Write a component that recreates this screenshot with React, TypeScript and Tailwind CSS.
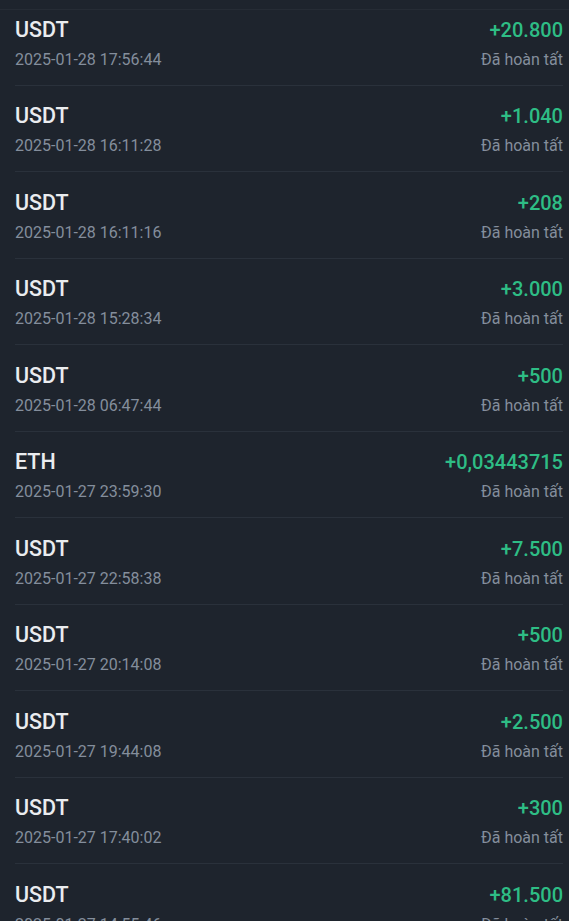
import React from "react";

const rows = [
  { coin: "USDT", date: "2025-01-28 17:56:44", amount: "+20.800" },
  { coin: "USDT", date: "2025-01-28 16:11:28", amount: "+1.040" },
  { coin: "USDT", date: "2025-01-28 16:11:16", amount: "+208" },
  { coin: "USDT", date: "2025-01-28 15:28:34", amount: "+3.000" },
  { coin: "USDT", date: "2025-01-28 06:47:44", amount: "+500" },
  { coin: "ETH", date: "2025-01-27 23:59:30", amount: "+0,03443715" },
  { coin: "USDT", date: "2025-01-27 22:58:38", amount: "+7.500" },
  { coin: "USDT", date: "2025-01-27 20:14:08", amount: "+500" },
  { coin: "USDT", date: "2025-01-27 19:44:08", amount: "+2.500" },
  { coin: "USDT", date: "2025-01-27 17:40:02", amount: "+300" },
  { coin: "USDT", date: "2025-01-27 14:55:46", amount: "+81.500" },
];

function Row({ r, first }: { r: (typeof rows)[number]; first?: boolean }) {
  return (
    <div className={`relative ${first ? "h-[75.5px]" : "h-[86.5px]"} shrink-0`}>
      <div
        className={`flex justify-between items-center pl-[15px] pr-[6px] ${
          first ? "pt-[8px]" : "pt-[18.5px]"
        } h-[24px] box-content`}
      >
        <span className="text-[21.5px] leading-[24px] font-medium text-[#eaecef]">{r.coin}</span>
        <span className="text-[20px] leading-[24px] font-medium text-[#2ebd85]">{r.amount}</span>
      </div>
      <div className="flex justify-between items-center pl-[15px] pr-[6px] mt-[8px] h-[20px]">
        <span className="text-[16px] leading-[20px] text-[#848e9c]">{r.date}</span>
        <span className="text-[16px] leading-[20px] text-[#848e9c]">Đã hoàn tất</span>
      </div>
      <div className="absolute bottom-0 left-[15px] right-[6px] h-px bg-[#2a313b]" />
    </div>
  );
}

export default function App() {
  return (
    <div
      className="w-[569px] h-[921px] overflow-hidden bg-[#1e242d] flex flex-col"
      style={{ fontFamily: "Roboto, 'Noto Sans', sans-serif" }}
    >
      <div className="h-[10px] shrink-0 border-b border-[#262c35]" />
      {rows.map((r, i) => (
        <Row key={i} r={r} first={i === 0} />
      ))}
    </div>
  );
}
